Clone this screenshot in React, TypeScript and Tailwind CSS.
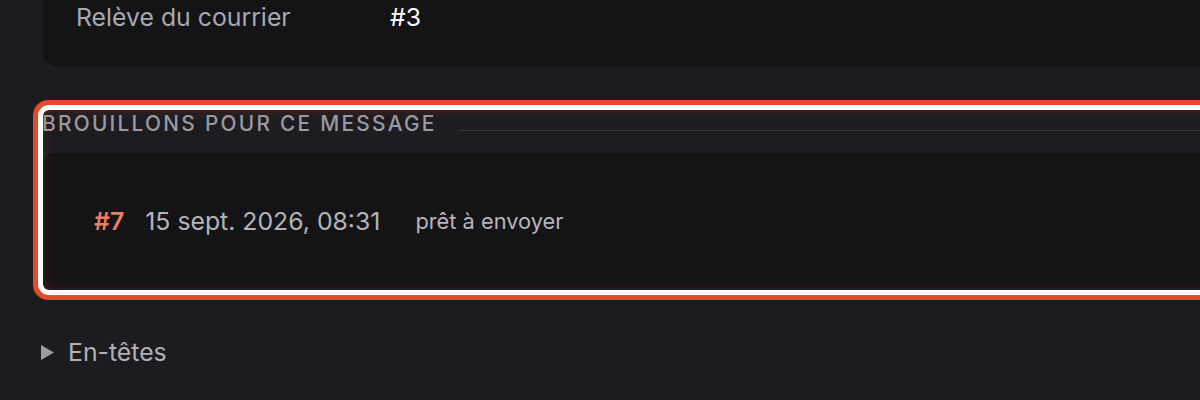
export default function App() {
  return (
    <div
      className="h-[400px] w-[1200px] overflow-hidden bg-[#1c1b1f] text-[#b4b4bb]"
      style={{ fontFamily: "Inter, 'Noto Sans', sans-serif" }}
    >
      <div className="w-[1260px] pl-[42px]">
        {/* summary card, cut off at the top */}
        <div className="h-[67px] rounded-b-[18px] bg-[#141316] pl-[34px]">
          <div className="flex items-center pt-[2px] text-[24.8px] leading-[30px]">
            <span className="w-[314px] text-[#a8a8b0]">Relève du courrier</span>
            <span className="text-white">#3</span>
          </div>
        </div>

        {/* highlighted drafts section */}
        <section className="relative ml-px mt-[43px] h-[180px] overflow-hidden rounded-[6px] bg-[#1d1c21] shadow-[0_0_0_10px_#e44b2c] outline-[5px] outline-white">
          <div className="flex items-end gap-[22px] pr-4">
            <h2 className="-ml-px text-[20.8px] font-medium uppercase leading-[28px] tracking-[0.11em] text-[#9b9aa1]">
              Brouillons pour ce message
            </h2>
            <div className="mb-[7px] h-[1.5px] flex-1 bg-[#37363c]" />
          </div>
          <div className="mt-[15px] flex h-[137px] items-center gap-[21px] rounded-tl-[12px] bg-[#141316] pl-[51px]">
            <span className="text-[24.8px] font-semibold text-[#e8805f]">#7</span>
            <span className="text-[24.8px] text-[#b3b3ba]">15 sept. 2026, 08:31</span>
            <span className="ml-[14px] text-[21.8px] text-[#b6b6bd]">prêt à envoyer</span>
          </div>
          {/* soft glow of the focus ring */}
          <div className="pointer-events-none absolute inset-0 rounded-[6px] shadow-[inset_0_0_14px_rgba(228,75,44,0.22)]" />
        </section>

        {/* collapsed headers */}
        <div className="mt-[47px] flex items-center gap-[14px] text-[24.8px] leading-[30px] text-[#b0b0b7]">
          <svg width="13" height="15" viewBox="0 0 13 15" className="ml-[-1px]">
            <path d="M0 0 L13 7.5 L0 15 Z" fill="#9d9ca3" />
          </svg>
          <span>En-têtes</span>
        </div>
      </div>
    </div>
  );
}
